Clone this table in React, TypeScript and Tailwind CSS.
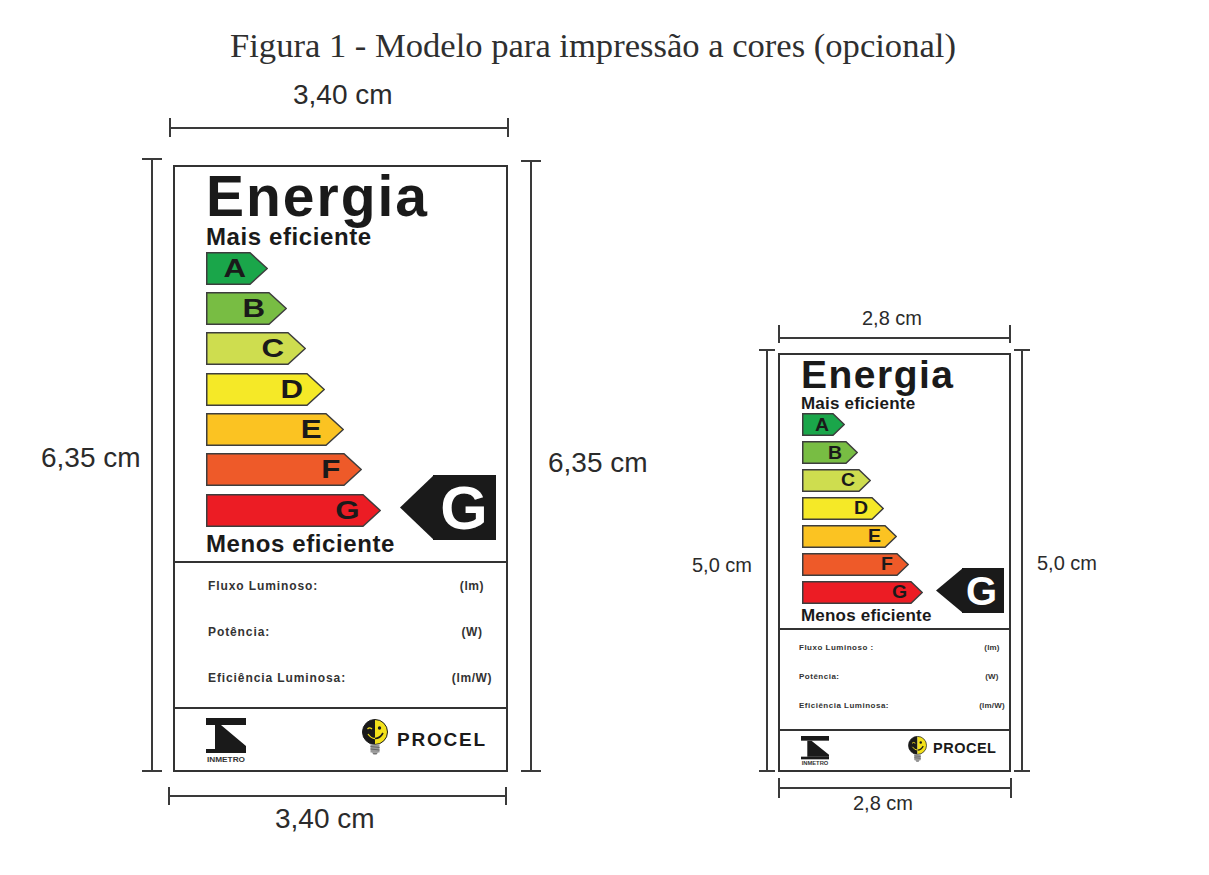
import React from "react";

type Sz = "lg" | "sm";

const ARROWS = [
  { l: "A", c: "#1aa64a" },
  { l: "B", c: "#78bd43" },
  { l: "C", c: "#cedd4f" },
  { l: "D", c: "#f5e927" },
  { l: "E", c: "#fbc322" },
  { l: "F", c: "#ee5a29" },
  { l: "G", c: "#ec1c24" },
];

const LG_W = [62, 81, 100, 119, 138, 156, 175];
const SM_W = [43, 56, 69, 82, 95, 107, 121];

function Arrow({ w, h, head, color, letter, sz }: { w: number; h: number; head: number; color: string; letter: string; sz: Sz }) {
  return (
    <div className="relative shrink-0">
      <svg width={w} height={h} className="block">
        <polygon
          points={`0.75,0.75 ${w - head},0.75 ${w - 0.75},${h / 2} ${w - head},${h - 0.75} 0.75,${h - 0.75}`}
          fill={color}
          stroke="#3d3d3d"
          strokeWidth={1.5}
        />
      </svg>
      <span
        className={
          sz === "lg"
            ? "absolute inset-y-0 right-[22px] flex items-center text-[25px] font-bold leading-none text-[#1a1a1a]"
            : "absolute inset-y-0 right-[16px] flex items-center text-[18px] font-bold leading-none text-[#1a1a1a]"
        }
      >
        <span className={sz === "lg" ? "inline-block origin-right scale-x-[1.25]" : "inline-block origin-right scale-x-[1.08]"}>{letter}</span>
      </span>
    </div>
  );
}

function Pointer({ sz }: { sz: Sz }) {
  const lg = sz === "lg";
  return (
    <div className={lg ? "flex shrink-0 ml-[19px] -mt-[19px] -mb-[13px]" : "flex shrink-0 ml-[13px] -mt-[12.5px] -mb-[9.5px]"}>
      {lg ? (
        <svg width={34} height={65} className="block">
          <polygon points="0,32.5 34,0 34,65" fill="#1a1a1a" />
        </svg>
      ) : (
        <svg width={27} height={45} className="block">
          <polygon points="0,22.5 27,0 27,45" fill="#1a1a1a" />
        </svg>
      )}
      <div
        className={
          lg
            ? "-ml-[1px] w-[63px] h-[65px] bg-[#1a1a1a] flex items-center justify-center pt-[3px] pr-[1px] text-white font-bold text-[61px] leading-none"
            : "-ml-[1px] w-[42px] h-[45px] bg-[#1a1a1a] flex items-center justify-center pt-[1px] pr-[3px] text-white font-bold text-[40px] leading-none"
        }
      >
        G
      </div>
    </div>
  );
}

function Inmetro({ sz }: { sz: Sz }) {
  const lg = sz === "lg";
  return (
    <svg width={lg ? 40 : 28} height={lg ? 45 : 30} viewBox="0 0 40 45" preserveAspectRatio="none" className="block shrink-0">
      <rect x="0" y="0" width="40" height="7" fill="#1a1a1a" />
      <path d="M9,7 L15,7 Q28,18 40,28 L40,31 L9,31 Z" fill="#1a1a1a" />
      <rect x="0" y="31" width="40" height="4" fill="#1a1a1a" />
      <text x="1" y="44" fontSize="8" fontFamily="Liberation Sans, Arial, sans-serif" fontWeight="bold" fill="#333" textLength="38" lengthAdjust="spacingAndGlyphs">
        INMETRO
      </text>
    </svg>
  );
}

function Bulb({ sz }: { sz: Sz }) {
  const lg = sz === "lg";
  return (
    <svg width={lg ? 26 : 19} height={lg ? 36 : 26} viewBox="0 0 26 36" className="block shrink-0">
      <path d="M13,0.5 A12.5,12.5 0 0 0 13,25.5 Z" fill="#1a1a1a" />
      <path d="M13,0.5 A12.5,12.5 0 0 1 13,25.5 Z" fill="#f3e11b" />
      <circle cx="13" cy="13" r="12.5" fill="none" stroke="#1a1a1a" strokeWidth="1" />
      <circle cx="17.5" cy="9" r="1.7" fill="#1a1a1a" />
      <path d="M5.5,10 q2,-2.2 4.5,0" stroke="#f3e11b" strokeWidth="1.3" fill="none" />
      <path d="M13,19.5 Q18,19.5 21,14" stroke="#1a1a1a" strokeWidth="1.6" fill="none" />
      <path d="M6,15 Q9,19.5 13,19.5" stroke="#f3e11b" strokeWidth="1.3" fill="none" />
      <rect x="8.5" y="25.5" width="9" height="8" fill="#9a9a9a" />
      <line x1="8.5" y1="27.5" x2="17.5" y2="28.5" stroke="#666" strokeWidth="1" />
      <line x1="8.5" y1="30" x2="17.5" y2="31" stroke="#666" strokeWidth="1" />
      <path d="M10,33.5 L16,33.5 L14.5,35.5 L11.5,35.5 Z" fill="#777" />
    </svg>
  );
}

const ROWS_LG = [
  { k: "Fluxo Luminoso:", u: "(lm)" },
  { k: "Potência:", u: "(W)" },
  { k: "Eficiência Luminosa:", u: "(lm/W)" },
];
const ROWS_SM = [
  { k: "Fluxo Luminoso :", u: "(lm)" },
  { k: "Potência:", u: "(W)" },
  { k: "Eficiência Luminosa:", u: "(lm/W)" },
];

function Label({ sz }: { sz: Sz }) {
  const lg = sz === "lg";
  const widths = lg ? LG_W : SM_W;
  const rows = lg ? ROWS_LG : ROWS_SM;
  return (
    <div
      className={
        lg
          ? "w-[335px] h-[607px] shrink-0 border-2 border-[#333] flex flex-col bg-white text-[#1a1a1a]"
          : "w-[233px] h-[419px] shrink-0 border-2 border-[#333] flex flex-col bg-white text-[#1a1a1a]"
      }
    >
      <div
        className={
          lg
            ? "h-[396px] shrink-0 border-b-2 border-[#333] pl-[31px] pt-[3px] flex flex-col"
            : "h-[275px] shrink-0 border-b-2 border-[#333] pl-[21px] pt-[2.5px] flex flex-col"
        }
      >
        <div className={lg ? "text-[57px] tracking-[2px] leading-[52px] font-bold" : "text-[39px] tracking-[1.5px] leading-[34px] font-bold"}>
          Energia
        </div>
        <div className={lg ? "mt-[2.5px] text-[24px] tracking-[0.6px] leading-none font-bold" : "mt-[3px] text-[17px] tracking-[0.2px] leading-none font-bold"}>
          Mais eficiente
        </div>
        <div className={lg ? "mt-[3.3px] flex flex-col gap-[7.33px]" : "mt-[1.7px] ml-[1px] flex flex-col gap-[4.9px]"}>
          {ARROWS.map((a, i) => (
            <div key={a.l} className="flex items-center">
              <Arrow w={widths[i]} h={lg ? 33 : 23} head={lg ? 18 : 12} color={a.c} letter={a.l} sz={sz} />
              {i === 6 && <Pointer sz={sz} />}
            </div>
          ))}
        </div>
        <div
          className={
            lg
              ? "mt-[5.7px] text-[24px] tracking-[0.6px] leading-none font-bold"
              : "mt-[3.9px] text-[17px] tracking-[0.2px] leading-none font-bold"
          }
        >
          Menos eficiente
        </div>
      </div>
      <div
        className={
          lg
            ? "h-[146px] shrink-0 border-b-2 border-[#333] flex flex-col pl-[33px] pr-[9px]"
            : "h-[101px] shrink-0 border-b-2 border-[#333] flex flex-col pt-[3.5px] pl-[19px] pr-[2px]"
        }
      >
        {rows.map((r) => (
          <div key={r.k} className={lg ? "h-[46px] flex items-center justify-between" : "h-[29px] flex items-center justify-between"}>
            <span className={lg ? "text-[12px] font-bold tracking-[0.9px] text-[#333] whitespace-nowrap" : "text-[8px] font-bold tracking-[0.5px] text-[#333] whitespace-nowrap"}>
              {r.k}
            </span>
            <span
              className={
                lg
                  ? "w-[50px] text-center text-[12px] font-bold tracking-[0.6px] text-[#333] whitespace-nowrap"
                  : "w-[30px] text-center text-[8px] font-bold tracking-[0.2px] text-[#333] whitespace-nowrap"
              }
            >
              {r.u}
            </span>
          </div>
        ))}
      </div>
      <div className={lg ? "flex-1 flex items-start pl-[31px] pt-[9px]" : "flex-1 flex items-start pl-[21px] pt-[5px]"}>
        <Inmetro sz={sz} />
        <div className={lg ? "ml-[116px] mt-[1px] flex items-start" : "ml-[79px] flex items-start"}>
          <Bulb sz={sz} />
          <span
            className={
              lg
                ? "ml-[9px] mt-[10.5px] text-[19px] tracking-[1.8px] font-bold leading-none"
                : "ml-[6px] mt-[5px] text-[14.5px] tracking-[0.5px] font-bold leading-none"
            }
          >
            PROCEL
          </span>
        </div>
      </div>
    </div>
  );
}

function HDim({ className, lineClass }: { className: string; lineClass: string }) {
  return (
    <div className={`flex shrink-0 ${className}`}>
      <div className="w-[2px] h-full bg-[#3a3a3a]" />
      <div className={`flex-1 h-[2px] bg-[#3a3a3a] ${lineClass}`} />
      <div className="w-[2px] h-full bg-[#3a3a3a]" />
    </div>
  );
}

function VDim({ className }: { className: string }) {
  return (
    <div className={`flex flex-col items-center shrink-0 ${className}`}>
      <div className="h-[2px] w-full bg-[#3a3a3a]" />
      <div className="flex-1 w-[2px] bg-[#3a3a3a]" />
      <div className="h-[2px] w-full bg-[#3a3a3a]" />
    </div>
  );
}

export default function App() {
  return (
    <div className="w-[1209px] h-[875px] bg-white overflow-hidden font-['Liberation_Sans',Arial,sans-serif] text-[#2b2b2b]">
      <h1 className="pt-[25px] pl-[230px] font-['Liberation_Serif','Times_New_Roman',serif] text-[34.6px] leading-[40px] text-[#2f2f2f] whitespace-nowrap font-normal">
        Figura 1 - Modelo para impressão a cores (opcional)
      </h1>
      <div className="flex items-start mt-[14px] pl-[42px]">
        {/* Large label figure */}
        <div className="flex flex-col w-[603px] shrink-0">
          <div className="ml-[251px] text-[28px] leading-[32px] whitespace-nowrap">3,40 cm</div>
          <HDim className="ml-[127px] mt-[7px] w-[340px] h-[19px]" lineClass="self-center" />
          <div className="flex mt-[21px]">
            <div className="w-[97px] shrink-0 mt-[284px] -ml-[1px] text-[28px] leading-[32px] whitespace-nowrap">6,35 cm</div>
            <VDim className="ml-[4px] w-[20px] h-[614px]" />
            <div className="ml-[11px] mt-[7px]">
              <Label sz="lg" />
            </div>
            <VDim className="ml-[13px] mt-[2px] w-[20px] h-[612px]" />
            <div className="ml-[7px] mt-[289px] text-[28px] leading-[32px] whitespace-nowrap">6,35 cm</div>
          </div>
          <HDim className="ml-[126px] mt-[15px] w-[339px] h-[18px]" lineClass="self-center" />
          <div className="ml-[233px] -mt-[2px] text-[28px] leading-[32px] whitespace-nowrap">3,40 cm</div>
        </div>

        {/* Small label figure */}
        <div className="flex flex-col ml-[47px] mt-[227px] shrink-0">
          <div className="ml-[170px] text-[20px] leading-[24px] whitespace-nowrap">2,8 cm</div>
          <HDim className="ml-[86px] -mt-[5px] w-[233px] h-[18px]" lineClass="mt-[12px]" />
          <div className="flex mt-[6px]">
            <div className="w-[61px] shrink-0 mt-[204px] text-[20px] leading-[24px] whitespace-nowrap">5,0 cm</div>
            <VDim className="ml-[6px] w-[16px] h-[423px]" />
            <div className="ml-[3px] mt-[4px]">
              <Label sz="sm" />
            </div>
            <VDim className="ml-[3px] w-[16px] h-[423px]" />
            <div className="ml-[7px] mt-[202px] text-[20px] leading-[24px] whitespace-nowrap">5,0 cm</div>
          </div>
          <HDim className="ml-[86px] mt-[6px] w-[234px] h-[20px]" lineClass="self-center" />
          <div className="ml-[161px] -mt-[7px] text-[20px] leading-[24px] whitespace-nowrap">2,8 cm</div>
        </div>
      </div>
    </div>
  );
}
